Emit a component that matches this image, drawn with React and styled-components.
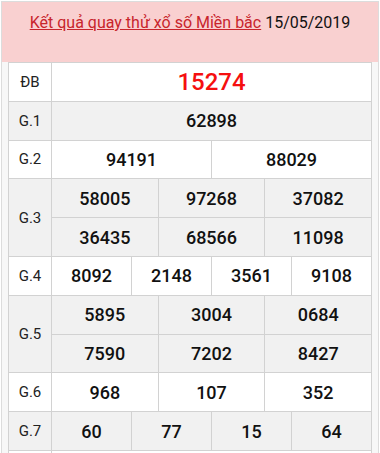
import React from 'react';
import styled, { createGlobalStyle } from 'styled-components';

const GlobalStyle = createGlobalStyle`
  body {
    margin: 0;
    background: #fff;
    font-family: Roboto, "Noto Sans", Arial, sans-serif;
  }
`;

const results = [
  { label: 'ĐB', rows: [['15274']], cols: 1, special: true },
  { label: 'G.1', rows: [['62898']], cols: 1 },
  { label: 'G.2', rows: [['94191', '88029']], cols: 2 },
  { label: 'G.3', rows: [['58005', '97268', '37082'], ['36435', '68566', '11098']], cols: 3 },
  { label: 'G.4', rows: [['8092', '2148', '3561', '9108']], cols: 4 },
  { label: 'G.5', rows: [['5895', '3004', '0684'], ['7590', '7202', '8427']], cols: 3 },
  { label: 'G.6', rows: [['968', '107', '352']], cols: 3 },
  { label: 'G.7', rows: [['60', '77', '15', '64']], cols: 4 },
];

const App = () => {
  return (
    <>
      <GlobalStyle />
      <Box>
        <Header>
          <Title>
            <a href="#">Kết quả quay thử xổ số Miền bắc</a> 15/05/2019
          </Title>
        </Header>
        <Table>
          {results.map((prize, i) => (
            <Prize key={prize.label} $shade={i % 2 === 1}>
              <Label>{prize.label}</Label>
              <Numbers $cols={prize.cols}>
                {prize.rows.flat().map((n, j) => (
                  <Num key={j} $special={prize.special}>{n}</Num>
                ))}
              </Numbers>
            </Prize>
          ))}
          <Prize $shade={false}>
            <Label>&nbsp;</Label>
            <Numbers $cols={1}>
              <Num>&nbsp;</Num>
            </Numbers>
          </Prize>
        </Table>
      </Box>
    </>
  );
};

const Box = styled.div`
  margin: 1px;
  border: 1px solid #dcdcdc;
  background: #f7f7f7;
`;

const Header = styled.div`
  background: #f9d0d0;
  height: 60px;
  padding-top: 10px;
  box-sizing: border-box;
`;

const Title = styled.h1`
  margin: 0;
  text-align: center;
  font-size: 16px;
  font-weight: 400;
  line-height: 22px;
  color: #111;
  a {
    color: #c8252c;
    text-decoration: underline;
  }
`;

const Table = styled.div`
  margin: 0 6px;
  display: grid;
  gap: 1px;
  background: #d2d2d2;
  border: 1px solid #d2d2d2;
  border-bottom: none;
`;

const Prize = styled.div`
  display: grid;
  grid-template-columns: 42px 1fr;
  gap: 1px;
  > * {
    background: ${(p) => (p.$shade ? '#f1f1f1' : '#fff')};
  }
  > div > div {
    background: ${(p) => (p.$shade ? '#f1f1f1' : '#fff')};
  }
`;

const Label = styled.div`
  display: flex;
  align-items: center;
  justify-content: center;
  font-size: 15px;
  color: #222;
`;

const Numbers = styled.div`
  display: grid;
  grid-template-columns: repeat(${(p) => p.$cols}, 1fr);
  gap: 1px;
  background: #d2d2d2 !important;
`;

const Num = styled.div`
  height: 37.8px;
  display: flex;
  align-items: center;
  justify-content: center;
  font-size: ${(p) => (p.$special ? '24px' : '18px')};
  font-weight: 500;
  color: ${(p) => (p.$special ? '#f50f0f' : '#111')};
`;

export default App;
